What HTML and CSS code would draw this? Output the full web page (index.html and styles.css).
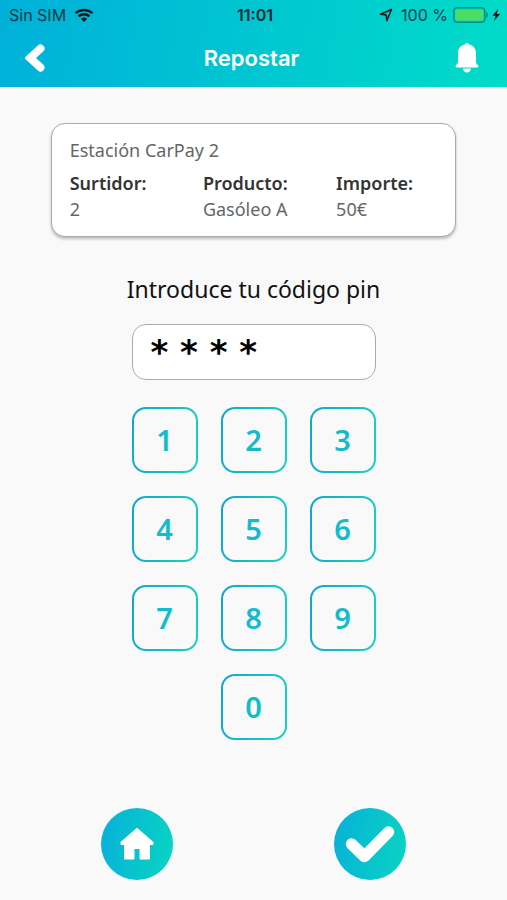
FILE: index.html
```html
<!DOCTYPE html>
<html lang="es">
<head>
<meta charset="utf-8">
<meta name="viewport" content="width=device-width, initial-scale=1">
<title>Repostar</title>
<link rel="stylesheet" href="styles.css">
</head>
<body>
<header class="top">
  <div class="status">
    <div class="status-side">
      <span>Sin SIM</span>
      <svg width="20" height="15" viewBox="0 0 20 15" aria-hidden="true">
        <path d="M1.6 5.2C6.3.8 13.7.8 18.4 5.2M4.6 8.3c3-2.8 7.8-2.8 10.8 0" fill="none" stroke="currentColor" stroke-width="2.5"/>
        <path d="M6.8 10.8c1.8-1.6 4.6-1.6 6.4 0L10 14z" fill="currentColor"/>
      </svg>
    </div>
    <strong class="clock">11:01</strong>
    <div class="status-side status-end">
      <svg class="locate" width="14" height="14" viewBox="0 0 14 14" aria-hidden="true"><path d="M12.5 1.5 1.5 6.3l5.7.6.6 5.7z" fill="none" stroke="currentColor" stroke-width="1.5" stroke-linejoin="round"/></svg>
      <span>100 %</span>
      <svg width="48" height="16" viewBox="0 0 48 16" aria-hidden="true">
        <rect x=".8" y=".8" width="31" height="14.4" rx="3.5" fill="none" stroke="#078d83" stroke-width="1.5"/>
        <rect x="2.5" y="2.5" width="27.6" height="11" rx="1.5" fill="#4cde64"/>
        <path d="M33.6 5.5q2 2.5 0 5z" fill="#078d83" stroke="#078d83" stroke-width=".8"/>
        <path d="M45 2l-5.500 6.800h3L41 14l6-7h-3.200z" fill="currentColor"/>
      </svg>
    </div>
  </div>
  <nav class="bar">
    <button class="icon-button" type="button" aria-label="Atrás">
      <svg width="22" height="28" viewBox="0 0 22 28"><path d="M15.500 4.500 5 14l10.500 9.500" fill="none" stroke="#fff" stroke-width="8" stroke-linecap="round" stroke-linejoin="miter"/></svg>
    </button>
    <h1 class="title">Repostar</h1>
    <button class="icon-button" type="button" aria-label="Notificaciones">
      <svg width="24" height="30" viewBox="0 0 24 30"><path d="M12 0c1.200 0 1.800.7 2.200 1.600C18.800 2.600 21 6 21 10.500V18c0 2 .5 3 2 4.300.8.700.5 2.200-.8 2.200H1.800C.5 24.500.2 23 1 22.300 2.500 21 3 20 3 18v-7.500c0-4.500 2.200-7.900 6.800-8.900C10.200.700 10.800 0 12 0zM8 25.500h8c0 2.200-1.800 4-4 4s-4-1.800-4-4z" fill="#fff"/></svg>
    </button>
  </nav>
</header>
<main class="content">
  <section class="card">
    <h2 class="station">Estación CarPay 2</h2>
    <dl class="details">
      <div><dt>Surtidor:</dt><dd>2</dd></div>
      <div><dt>Producto:</dt><dd>Gasóleo A</dd></div>
      <div><dt>Importe:</dt><dd>50€</dd></div>
    </dl>
  </section>
  <form class="pin">
    <label class="pin-label" for="pin">Introduce tu código pin</label>
    <input class="pin-input" id="pin" type="text" value="* * * *" readonly>
    <div class="keys">
      <button class="key" type="button">1</button>
      <button class="key" type="button">2</button>
      <button class="key" type="button">3</button>
      <button class="key" type="button">4</button>
      <button class="key" type="button">5</button>
      <button class="key" type="button">6</button>
      <button class="key" type="button">7</button>
      <button class="key" type="button">8</button>
      <button class="key" type="button">9</button>
      <button class="key key-zero" type="button">0</button>
    </div>
  </form>
</main>
<footer class="actions">
  <button class="round" type="button" aria-label="Inicio">
    <svg width="72" height="72" viewBox="0 0 72 72"><path d="M36 21 51.500 34.500V36H48v14.500h-8.500V40h-7v10.500H24V36h-3.500v-1.500z" fill="#fff" stroke="#fff" stroke-width="2" stroke-linejoin="round"/></svg>
  </button>
  <button class="round" type="button" aria-label="Confirmar">
    <svg width="72" height="72" viewBox="0 0 72 72"><path d="M17.500 36 30.500 48.500l24-24.500" fill="none" stroke="#fff" stroke-width="11.500" stroke-linecap="round" stroke-linejoin="round"/></svg>
  </button>
</footer>
</body>
</html>
```

FILE: styles.css
```css
* {
  box-sizing: border-box;
}

body {
  margin: 0;
  min-height: 100vh;
  display: flex;
  flex-direction: column;
  background: #f9f9f9;
  color: #111;
  font-family: "Noto Sans", sans-serif;
}

h1, h2, dl, dd {
  margin: 0;
}

button {
  padding: 0;
  border: 0;
  background: none;
  font: inherit;
  cursor: pointer;
}

svg {
  display: block;
}

.top {
  background: linear-gradient(100deg, #00b0da, #00dcc8);
  font-family: Inter, sans-serif;
}

.status {
  display: flex;
  align-items: center;
  height: 30px;
  padding: 0 6px 0 9px;
  color: #073b43;
  font-size: 16px;
}

.status-side {
  flex: 1;
  display: flex;
  align-items: center;
  gap: 8px;
}

.status-side svg {
  color: #05191c;
}

.status-end {
  justify-content: flex-end;
  gap: 5px;
}

.locate {
  margin-right: 3px;
}

.clock {
  color: #062a30;
  font-weight: 600;
}

.bar {
  display: flex;
  align-items: center;
  justify-content: space-between;
  height: 57px;
  padding: 0 28px 2px 24px;
}

.icon-button {
  width: 24px;
  display: flex;
  justify-content: center;
}

.title {
  color: #fff;
  font-size: 22px;
  font-weight: 600;
}

.content {
  flex: 1;
}

.card {
  width: 80%;
  margin: 36px auto 0;
  padding: 13px 18px 14px;
  border: 1px solid #aaa;
  border-radius: 14px;
  background: #fff;
  box-shadow: 0 2px 3px rgba(0, 0, 0, 0.25);
  color: #666;
  font-size: 18px;
  line-height: 26px;
}

.station {
  font-size: 18px;
  font-weight: 400;
}

.details {
  display: grid;
  grid-template-columns: repeat(3, 1fr);
  column-gap: 32px;
  margin-top: 7px;
}

.details dt {
  color: #333;
  font-weight: 600;
}

.pin {
  width: 244px;
  margin: 36px auto 0;
  display: flex;
  flex-direction: column;
  align-items: center;
}

.pin-label {
  font-size: 23px;
  line-height: 32px;
  white-space: nowrap;
}

.pin-input {
  width: 100%;
  height: 56px;
  margin-top: 19px;
  padding: 0 18px;
  border: 1px solid #aaa;
  border-radius: 14px;
  background: #fff;
  color: #000;
  font: 700 34px "DejaVu Sans", sans-serif;
}

.keys {
  display: grid;
  grid-template-columns: repeat(3, 66px);
  gap: 23px;
  margin-top: 27px;
}

.key {
  height: 66px;
  border: 2px solid transparent;
  border-radius: 14px;
  background:
    linear-gradient(#f9f9f9, #f9f9f9) padding-box,
    linear-gradient(100deg, #12a5d2, #18d3bd) border-box;
  color: #12bccb;
  font-size: 29px;
  font-weight: 600;
  line-height: 60px;
}

.key-zero {
  grid-column: 2;
}

.actions {
  display: flex;
  justify-content: space-between;
  padding: 20px 20%;
}

.round {
  width: 72px;
  height: 72px;
  border-radius: 50%;
  background: linear-gradient(100deg, #08b0d8, #08d5c3);
}
```
